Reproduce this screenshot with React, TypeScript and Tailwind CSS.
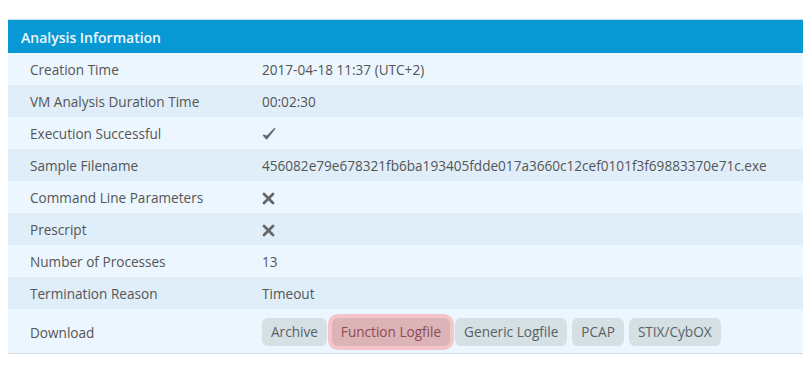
const CheckMark = () => (
  <svg width="14" height="14" viewBox="0 0 14 14" className="text-[#666]">
    <path d="M1.5 8.2 L4.6 11.8 L12.6 1.8 L5 9.4 Z" fill="currentColor" stroke="currentColor" strokeWidth="1.4" strokeLinejoin="round" />
  </svg>
);

const Cross = () => (
  <svg width="13" height="13" viewBox="0 0 13 13" className="text-[#666]">
    <path d="M2 2 L11 11 M11 2 L2 11" stroke="currentColor" strokeWidth="2.8" strokeLinecap="round" />
  </svg>
);

const ROWS: { label: string; value: React.ReactNode }[] = [
  { label: "Creation Time", value: "2017-04-18 11:37 (UTC+2)" },
  { label: "VM Analysis Duration Time", value: "00:02:30" },
  { label: "Execution Successful", value: <CheckMark /> },
  {
    label: "Sample Filename",
    value: "456082e79e678321fb6ba193405fdde017a3660c12cef0101f3f69883370e71c.exe",
  },
  { label: "Command Line Parameters", value: <Cross /> },
  { label: "Prescript", value: <Cross /> },
  { label: "Number of Processes", value: "13" },
  { label: "Termination Reason", value: "Timeout" },
];

const DOWNLOADS = ["Archive", "Function Logfile", "Generic Logfile", "PCAP", "STIX/CybOX"];

const App = () => {
  return (
    <div className="w-[803px] h-[367px] overflow-hidden bg-white pt-[19px] pl-2 font-['Open_Sans',sans-serif] text-[13.6px] text-[#555]">
      <div className="w-[820px] border-b border-[#d3dde3]">
        {/* header */}
        <div className="h-[34px] bg-[#0899d4] border-t border-[#bfe3f3] flex items-center pl-[13px]">
          <h2 className="text-[14px] font-semibold text-[#eef8fd] pt-[1px]">Analysis Information</h2>
        </div>

        {ROWS.map((row, i) => (
          <div
            key={row.label}
            className={`h-[32px] flex items-center pt-[2px] ${i % 2 === 0 ? "bg-[#ecf6fe]" : "bg-[#e0eefa]"}`}
          >
            <div className="w-[254px] pl-[22px]">{row.label}</div>
            <div className="flex items-center">{row.value}</div>
          </div>
        ))}

        <div className="h-[44px] flex items-center bg-[#ecf6fe]">
          <div className="w-[254px] pl-[22px] pt-[4px]">Download</div>
          <div className="flex items-center gap-[5px] pt-[2px]">
            {DOWNLOADS.map((d) =>
              d === "Function Logfile" ? (
                <span
                  key={d}
                  className="h-[28px] px-[9px] pt-[1px] flex items-center rounded-[6px] bg-[#dcb3b7] text-[#8c4d55] ring-4 ring-[#f4c6ca]"
                >
                  {d}
                </span>
              ) : (
                <span
                  key={d}
                  className="h-[28px] px-[9px] pt-[1px] flex items-center rounded-[6px] bg-[#d5e0e5] text-[#5a6166]"
                >
                  {d}
                </span>
              )
            )}
          </div>
        </div>
      </div>
    </div>
  );
};

export default App;
